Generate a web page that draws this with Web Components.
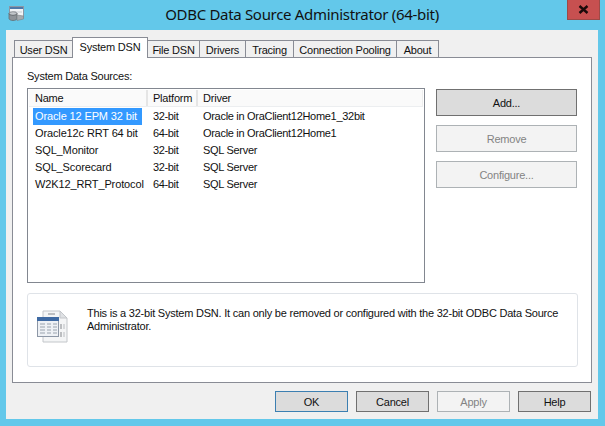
<!DOCTYPE html>
<html>
<head>
<meta charset="utf-8">
<title>ODBC Data Source Administrator (64-bit)</title>
<style>
    html, body { margin: 0; padding: 0; background: #63c8ea; }
    body { width: 605px; height: 426px; overflow: hidden; font: 11px "Liberation Sans", Arial, sans-serif; letter-spacing: -0.22px; color: #000; }
</style>
</head>
<body>
<odbc-window heading="ODBC Data Source Administrator (64-bit)">
    <tab-strip slot="tabs">
        <dlg-tab w="59">User DSN</dlg-tab>
        <dlg-tab w="76" active>System DSN</dlg-tab>
        <dlg-tab w="53">File DSN</dlg-tab>
        <dlg-tab w="47">Drivers</dlg-tab>
        <dlg-tab w="49">Tracing</dlg-tab>
        <dlg-tab w="104">Connection Pooling</dlg-tab>
        <dlg-tab w="43">About</dlg-tab>
    </tab-strip>
    <dsn-panel slot="panel"></dsn-panel>
    <dlg-button slot="footer" w="73" h="21" focused>OK</dlg-button>
    <dlg-button slot="footer" w="73" h="21">Cancel</dlg-button>
    <dlg-button slot="footer" w="73" h="21" disabled>Apply</dlg-button>
    <dlg-button slot="footer" w="73" h="21">Help</dlg-button>
</odbc-window>

<script>
// 标题栏 + 客户区
class OdbcWindow extends HTMLElement {
    constructor() {
        super();
        this.attachShadow({ mode: 'open' });
        this.shadowRoot.innerHTML = `
<style>
    :host { display: flex; flex-direction: column; width: 605px; height: 426px; box-sizing: border-box; padding: 0 7px 7px 6px; }
    .title { height: 30px; flex: none; display: flex; position: relative; justify-content: center; }
    .title span { font: 15px "Noto Sans", "Open Sans", sans-serif; letter-spacing: -0.31px; line-height: 29px; color: #111; }
    .icon { position: absolute; left: 8px; top: 6px; }
    .close { position: absolute; right: -2px; top: 0; width: 33px; height: 20px; box-sizing: border-box; background: #c75050; border: 1px solid #9c4a47; border-top: 0; display: flex; align-items: center; justify-content: center; }
    .client { flex: 1; background: #f0f0f0; display: flex; flex-direction: column; padding: 7px 6px 0 6px; min-height: 0; }
    .footer { display: flex; justify-content: flex-end; gap: 8px; padding-top: 8px; padding-right: 1px; }
    .sheet { height: 326px; box-sizing: border-box; background: #fff; border: 1px solid #898c95; margin-top: -1px; }
</style>
<svg class="icon" width="17" height="16" viewBox="0 0 17 16">
    <rect x="1.500" y="0.500" width="14" height="11" fill="#f2f4f6" stroke="#8b97a5"/>
    <rect x="2" y="1" width="13" height="2" fill="#4e78a8"/>
    <path d="M6 6h8" stroke="#c6ccd2"/>
    <ellipse cx="5" cy="7.500" rx="4" ry="1.800" fill="#c2c6ca" stroke="#6a6f74" stroke-width=".7"/>
    <path d="M1 7.500v5c0 1 1.800 2 4 2s4-1 4-2v-5c0 1-1.800 2-4 2s-4-1-4-2z" fill="#8e9398" stroke="#5f6468" stroke-width=".7"/>
    <path d="M9 9l6.500 1v3l-6.500 1.500z" fill="#a6abaf" stroke="#7c8185" stroke-width=".6"/>
</svg>
<div class="title"><span></span>
    <div class="close">
        <svg width="11" height="9" viewBox="0 0 11 9"><path d="M1.500 1l8 7M9.500 1l-8 7" stroke="#1a0a0a" stroke-width="2.400" fill="none"/></svg>
    </div>
</div>
<div class="client">
    <slot name="tabs"></slot>
    <div class="sheet"><slot name="panel"></slot></div>
    <div class="footer"><slot name="footer"></slot></div>
</div>`;
    }
    connectedCallback() {
        this.shadowRoot.querySelector('.title span').textContent = this.getAttribute('heading');
    }
}

class TabStrip extends HTMLElement {
    constructor() {
        super();
        this.attachShadow({ mode: 'open' });
        this.shadowRoot.innerHTML = `
<style>
    :host { display: flex; align-items: flex-end; height: 21px; padding-left: 2px; position: relative; z-index: 2; }
</style>
<slot></slot>`;
    }
}

class DlgTab extends HTMLElement {
    constructor() {
        super();
        this.attachShadow({ mode: 'open' });
        this.shadowRoot.innerHTML = `
<style>
    :host { display: flex; box-sizing: border-box; height: 18px; align-items: center; justify-content: center; flex: none; white-space: nowrap;
        background: #f0f0f0; border: 1px solid #898c95; border-bottom: 1px solid #898c95; margin-right: -1px; color: #111; padding-top: 1px; }
    :host([active]) { height: 21px; background: #fff; position: relative; z-index: 1; border-bottom: 0; padding: 0 0 2px 0; }
</style>
<slot></slot>`;
    }
    connectedCallback() {
        this.style.width = this.getAttribute('w') + 'px';
    }
}

class DlgButton extends HTMLElement {
    constructor() {
        super();
        this.attachShadow({ mode: 'open' });
        this.shadowRoot.innerHTML = `
<style>
    :host { display: flex; box-sizing: border-box; align-items: center; justify-content: center; flex: none;
        background: #dcdcdc; border: 1px solid #707070; color: #111; }
    :host([focused]) { border-color: #3c7fb1; }
    :host([disabled]) { background: #f3f3f3; border-color: #adb2b5; color: #838383; }
</style>
<slot></slot>`;
    }
    connectedCallback() {
        this.style.width = this.getAttribute('w') + 'px';
        this.style.height = this.getAttribute('h') + 'px';
    }
}

const ROWS = [
    ['Oracle 12 EPM 32 bit', '32-bit', 'Oracle in OraClient12Home1_32bit'],
    ['Oracle12c RRT 64 bit', '64-bit', 'Oracle in OraClient12Home1'],
    ['SQL_Monitor', '32-bit', 'SQL Server'],
    ['SQL_Scorecard', '32-bit', 'SQL Server'],
    ['W2K12_RRT_Protocol', '64-bit', 'SQL Server'],
];

// 数据源列表
class DsnList extends HTMLElement {
    constructor() {
        super();
        this.attachShadow({ mode: 'open' });
        const rows = ROWS.map((r, i) => `
<div class="row">
    <div class="c1"><span class="${i === 0 ? 'sel' : ''}">${r[0]}</span></div>
    <div class="c2">${r[1]}</div>
    <div class="c3">${r[2]}</div>
</div>`).join('');
        this.shadowRoot.innerHTML = `
<style>
    :host { display: block; width: 398px; height: 195px; box-sizing: border-box; border: 1px solid #828790; background: #fff; padding: 1px 1px 0 1px; color: #111; }
    .head { display: flex; height: 17px; box-sizing: border-box; background: #fafafa; border: 1px solid #eceef0; border-width: 0 0 1px 0; }
    .head div { box-sizing: border-box; border-right: 2px solid #e5e5e5; line-height: 17px; padding-left: 6px; }
    .head .h1 { width: 119px; padding-left: 6px; }
    .head .h2 { width: 50px; padding-left: 5px; }
    .head .h3 { flex: 1; border-right: 1px solid #eee; padding-left: 5px; }
    .rows { padding-top: 1px; }
    .row { display: flex; height: 17px; line-height: 17px; letter-spacing: -0.35px; }
    .c1 { width: 119px; flex: none; padding-left: 4px; box-sizing: border-box; white-space: nowrap; letter-spacing: -0.13px; }
    .c1 span { display: block; width: 109px; padding-left: 2px; white-space: nowrap; box-sizing: border-box; }
    .c1 .sel { background: #3399ff; color: #fff; }
    .c2 { width: 50px; flex: none; padding-left: 5px; box-sizing: border-box; }
    .c3 { flex: 1; padding-left: 5px; letter-spacing: -0.3px; }
</style>
<div class="head"><div class="h1">Name</div><div class="h2">Platform</div><div class="h3">Driver</div></div>
<div class="rows">${rows}</div>`;
    }
}

class InfoBox extends HTMLElement {
    constructor() {
        super();
        this.attachShadow({ mode: 'open' });
        this.shadowRoot.innerHTML = `
<style>
    :host { display: flex; box-sizing: border-box; width: 551px; height: 74px; border: 1px solid #dfe3e8; border-radius: 3px; background: #fff; padding: 13px 10px 0 9px; color: #111; }
    .ic { flex: none; width: 32px; margin-top: 3px; margin-right: 18px; }
    p { margin: 0; line-height: 13px; width: 480px; }
</style>
<div class="ic">
<svg width="34" height="34" viewBox="0 0 34 34">
    <path d="M6 1h17l7 7v24H6z" fill="#f4f5f6" stroke="#c3c6ca"/>
    <path d="M23 1v7h7z" fill="#dfe1e4" stroke="#c3c6ca"/>
    <path d="M11 4h7M24 14v5M24 22v5" stroke="#a9acb0" stroke-width="1.500"/>
    <path d="M27 14v5M27 22v5" stroke="#b9bcc0"/>
    <rect x="0.500" y="7.500" width="21" height="19" fill="#eef1f5" stroke="#8d97a6"/>
    <rect x="0" y="7" width="22" height="4" fill="#3f6aa3"/>
    <path d="M3 14h5M10 14h4M16 14h4M3 17h5M10 17h4M16 17h4M3 20h5M10 20h4M16 20h4M3 23h5M10 23h4M16 23h4" stroke="#9aa3ae"/>
</svg>
</div>
<p><slot></slot></p>`;
    }
}

// System DSN 页内容
class DsnPanel extends HTMLElement {
    constructor() {
        super();
        this.attachShadow({ mode: 'open' });
        this.shadowRoot.innerHTML = `
<style>
    :host { display: block; padding: 11px 13px 0 14px; color: #111; }
    .label { height: 19px; line-height: 14px; }
    .main { display: flex; gap: 11px; }
    .side { display: flex; flex-direction: column; gap: 9px; padding-top: 1px; }
    info-box { margin-top: 10px; }
</style>
<div class="label">System Data Sources:</div>
<div class="main">
    <dsn-list></dsn-list>
    <div class="side">
        <dlg-button w="141" h="27">Add...</dlg-button>
        <dlg-button w="141" h="27" disabled>Remove</dlg-button>
        <dlg-button w="141" h="27" disabled>Configure...</dlg-button>
    </div>
</div>
<info-box>This is a 32-bit System DSN. It can only be removed or configured with the 32-bit ODBC Data Source Administrator.</info-box>`;
    }
}

customElements.define('odbc-window', OdbcWindow);
customElements.define('tab-strip', TabStrip);
customElements.define('dlg-tab', DlgTab);
customElements.define('dlg-button', DlgButton);
customElements.define('dsn-list', DsnList);
customElements.define('info-box', InfoBox);
customElements.define('dsn-panel', DsnPanel);
</script>
</body>
</html>
